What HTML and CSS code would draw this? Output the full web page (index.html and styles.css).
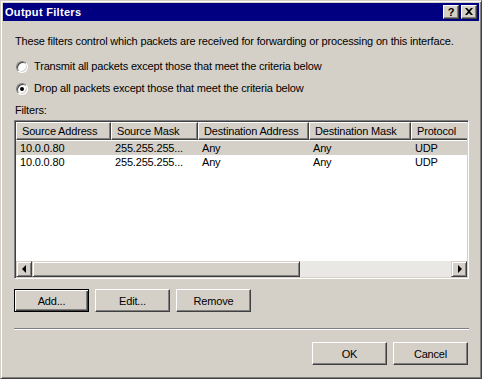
FILE: index.html
```html
<!DOCTYPE html>
<html>
<head>
<meta charset="utf-8">
<title>Output Filters</title>
<link rel="stylesheet" href="styles.css">
</head>
<body>
<div class="window">
  <div class="titlebar">
    <span class="title">Output Filters</span>
    <div class="tbtns">
      <span class="tbtn help">?</span>
      <span class="tbtn close"><svg width="8" height="7" viewBox="0 0 8 7"><path d="M0 0h2l2 2 2-2h2L5 3.5 8 7H6L4 5 2 7H0l3-3.5z" fill="#000"/></svg></span>
    </div>
  </div>
  <div class="content">
    <p class="intro">These filters control which packets are received for forwarding or processing on this interface.</p>
    <div class="radio r1"><span class="rbox"></span><span>Transmit all packets except those that meet the criteria below</span></div>
    <div class="radio r2"><span class="rbox checked"></span><span>Drop all packets except those that meet the criteria below</span></div>
    <div class="lbl">Filters:</div>
    <div class="list">
      <div class="viewport">
        <div class="cols header">
          <div class="hcell">Source Address</div>
          <div class="hcell">Source Mask</div>
          <div class="hcell">Destination Address</div>
          <div class="hcell">Destination Mask</div>
          <div class="hcell">Protocol</div>
        </div>
        <div class="cols row selected">
          <div class="cell">10.0.0.80</div>
          <div class="cell">255.255.255...</div>
          <div class="cell">Any</div>
          <div class="cell">Any</div>
          <div class="cell">UDP</div>
        </div>
        <div class="cols row">
          <div class="cell">10.0.0.80</div>
          <div class="cell">255.255.255...</div>
          <div class="cell">Any</div>
          <div class="cell">Any</div>
          <div class="cell">UDP</div>
        </div>
      </div>
      <div class="hscroll">
        <span class="sbtn"><span class="arrow left"></span></span>
        <span class="thumb"></span>
        <span class="track"></span>
        <span class="sbtn"><span class="arrow right"></span></span>
      </div>
    </div>
    <div class="btnrow">
      <button class="btn default">Add...</button>
      <button class="btn">Edit...</button>
      <button class="btn">Remove</button>
    </div>
    <div class="sep"></div>
    <div class="btnrow end">
      <button class="btn">OK</button>
      <button class="btn">Cancel</button>
    </div>
  </div>
</div>
</body>
</html>
```

FILE: styles.css
```css
* { box-sizing: border-box; }
html, body { margin: 0; padding: 0; }
body {
  background: #d4d0c8;
  font-family: "Liberation Sans", Arial, sans-serif;
  font-size: 11px;
  letter-spacing: -0.17px;
  color: #000;
}
.window {
  width: 482px;
  height: 379px;
  border: 1px solid;
  border-color: #d4d0c8 #404040 #404040 #d4d0c8;
  box-shadow: inset 1px 1px #fff, inset -1px -1px #808080;
  padding: 2px;
  background: #d4d0c8;
  display: flex;
  flex-direction: column;
}
.titlebar {
  height: 18px;
  background: #000080;
  display: flex;
  align-items: center;
  justify-content: space-between;
  padding: 0 2px 0 2px;
}
.title {
  color: #fff;
  font-weight: bold;
  font-size: 11px;
  line-height: 13px;
  letter-spacing: 0.3px;
}
.tbtns { display: flex; gap: 2px; }
.tbtn {
  width: 16px;
  height: 14px;
  background: #d4d0c8;
  border: 1px solid;
  border-color: #fff #404040 #404040 #fff;
  box-shadow: inset -1px -1px #808080;
  display: flex;
  align-items: center;
  justify-content: center;
  font-weight: bold;
  font-size: 11px;
  line-height: 12px;
  letter-spacing: 0;
}
.tbtn.help { padding-bottom: 1px; }
.tbtn svg { display: block; margin-bottom: 1px; }
.content {
  flex: 1;
  padding: 14px 10px 0 11px;
  display: flex;
  flex-direction: column;
}
.intro {
  margin: 0 0 0 1px;
  line-height: 13px;
  height: 13px;
  white-space: nowrap;
}
.radio {
  display: flex;
  align-items: center;
  gap: 6px;
  height: 13px;
  line-height: 13px;
  padding-left: 2px;
}
.r1 { margin-top: 12px; }
.r2 { margin-top: 9px; }
.rbox {
  width: 12px;
  height: 12px;
  border-radius: 50%;
  border: 1px solid;
  border-color: #808080 #fff #fff #808080;
  box-shadow: inset 1px 1px #404040, inset -1px -1px #d4d0c8;
  background: #fff;
  display: flex;
  align-items: center;
  justify-content: center;
  flex: none;
}
.rbox.checked::after {
  content: "";
  width: 4px;
  height: 4px;
  border-radius: 50%;
  background: #000;
}
.lbl {
  margin-top: 9px;
  margin-left: 1px;
  line-height: 13px;
}
.list {
  margin-top: 3px;
  height: 159px;
  margin-right: 0;
  border: 1px solid;
  border-color: #808080 #fff #fff #808080;
  box-shadow: inset 1px 1px #404040, inset -1px -1px #d4d0c8;
  padding: 1px;
  background: #fff;
  display: flex;
  flex-direction: column;
}
.viewport {
  flex: 1;
  overflow: hidden;
}
.cols {
  display: grid;
  grid-template-columns: 95px 87px 111px 102px 90px;
  width: 485px;
}
.header { height: 18px; margin-bottom: 1px; }
.hcell {
  background: #d4d0c8;
  border: 1px solid;
  border-color: #fff #404040 #404040 #fff;
  box-shadow: inset -1px -1px #808080;
  padding: 1px 0 0 5px;
  line-height: 15px;
  white-space: nowrap;
  overflow: hidden;
}
.row { height: 14px; overflow: hidden; }
.row.selected { background: #d4d0c8; }
.cell {
  padding: 1px 0 0 4px;
  line-height: 13px;
  white-space: nowrap;
}
.hscroll {
  height: 16px;
  display: flex;
  flex: none;
}
.sbtn {
  width: 16px;
  height: 16px;
  background: #d4d0c8;
  border: 1px solid;
  border-color: #d4d0c8 #404040 #404040 #d4d0c8;
  box-shadow: inset 1px 1px #fff, inset -1px -1px #808080;
  display: flex;
  align-items: center;
  justify-content: center;
  flex: none;
}
.arrow { width: 0; height: 0; border-top: 4px solid transparent; border-bottom: 4px solid transparent; }
.arrow.left { border-right: 4px solid #000; margin-right: 1px; }
.arrow.right { border-left: 4px solid #000; margin-left: 1px; }
.thumb {
  width: 268px;
  height: 16px;
  background: #d4d0c8;
  border: 1px solid;
  border-color: #d4d0c8 #404040 #404040 #d4d0c8;
  box-shadow: inset 1px 1px #fff, inset -1px -1px #808080;
  flex: none;
}
.track {
  flex: 1;
  background: #eae8e4;
}
.btnrow {
  display: flex;
  gap: 6px;
  margin-top: 10px;
}
.btnrow.end { justify-content: flex-end; margin-top: 12px; padding-right: 1px; }
.btn {
  width: 75px;
  height: 23px;
  background: #d4d0c8;
  border: 1px solid;
  border-color: #fff #404040 #404040 #fff;
  box-shadow: inset -1px -1px #808080;
  font-family: inherit;
  font-size: 11px;
  letter-spacing: -0.17px;
  color: #000;
  padding: 0;
  margin: 0;
}
.btn.default {
  border: 1px solid #000;
  box-shadow: inset 1px 1px #fff, inset -1px -1px #404040, inset -2px -2px #808080;
}
.sep {
  margin-top: 16px;
  height: 2px;
  border-top: 1px solid #808080;
  border-bottom: 1px solid #fff;
}
```
